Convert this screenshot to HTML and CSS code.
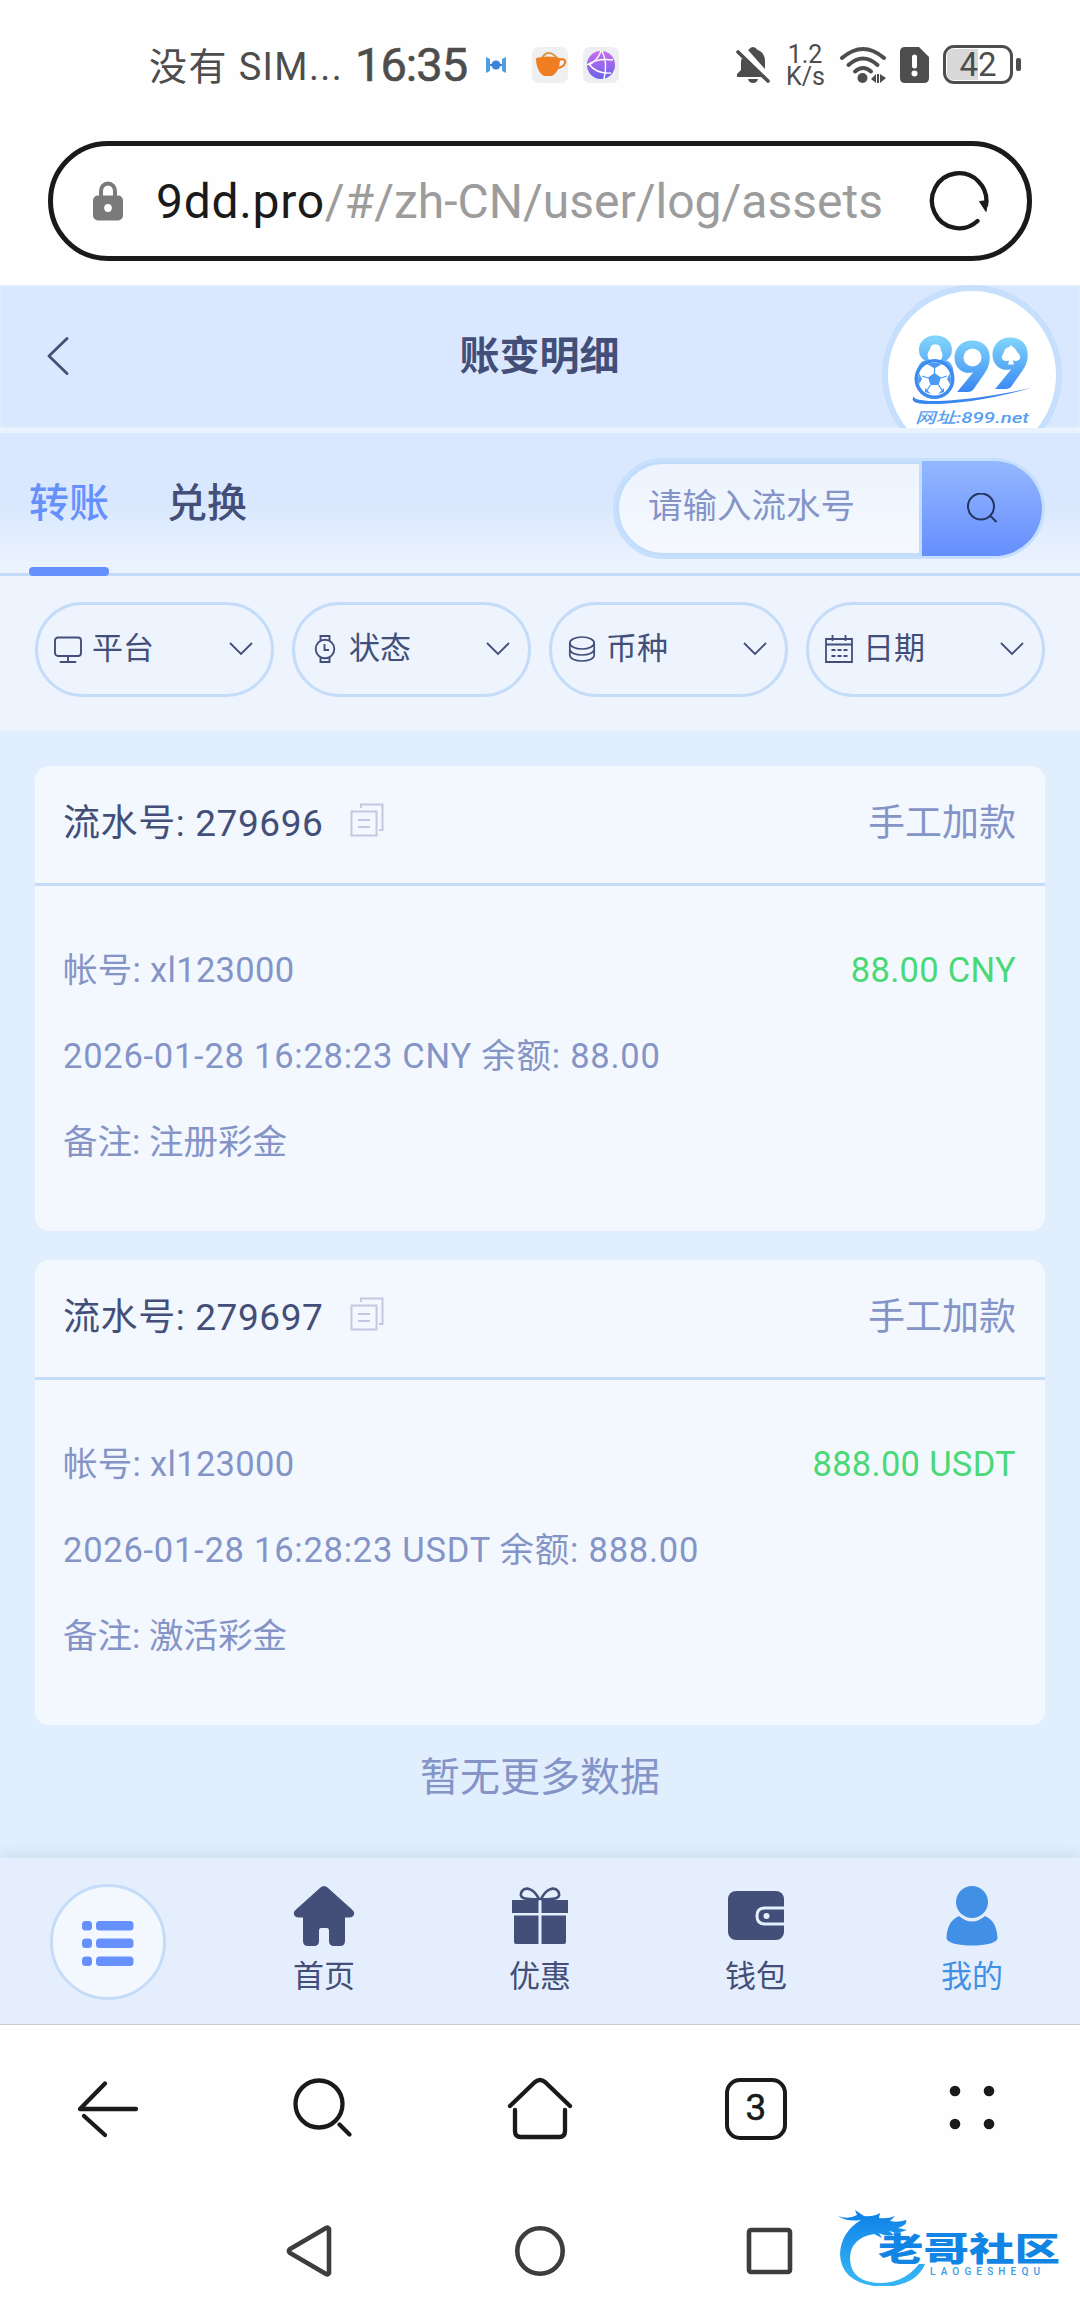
FILE: index.html
```html
<!DOCTYPE html>
<html lang="zh-CN">
<head>
  <meta charset="UTF-8">
  <meta name="viewport" content="width=device-width, initial-scale=1.0">
  <title>账变明细</title>
  <link rel="stylesheet" href="styles.css">
</head>
<body>
  <!-- 状态栏 -->
  <div class="status-bar">
    <span class="carrier">没有 SIM...</span>
    <span class="clock">16:35</span>
    <svg class="st-dock" width="20" height="18" viewBox="0 0 20 18"><path d="M0 1l4 2v12l-4 2zM20 1l-4 2v12l4 2z" fill="#4f9fe0"/><circle cx="10" cy="9" r="4.5" fill="#3b82d8"/><path d="M4 8h12v2H4z" fill="#3b82d8"/></svg>
    <svg class="st-cup" width="36" height="36" viewBox="0 0 36 36">
      <rect width="36" height="36" rx="7" fill="#eff0f1"/>
      <path d="M10 11c2-3 3-5 7-5s5 2 8 5" fill="none" stroke="#d99a4e" stroke-width="2"/>
      <path d="M4 11q12-3 24 0c0 10-3 15-8 18h-8C7 26 4 20 4 11z" fill="#ef7d22"/>
      <path d="M27 13c4-2 7 0 6 3s-5 5-8 5" fill="none" stroke="#ef7d22" stroke-width="2.2"/>
    </svg>
    <svg class="st-globe" width="36" height="36" viewBox="0 0 36 36">
      <defs><linearGradient id="globe" x1="0" y1="0" x2="0" y2="1"><stop offset="0" stop-color="#c86cf0"/><stop offset="1" stop-color="#6a63ea"/></linearGradient></defs>
      <rect width="36" height="36" rx="7" fill="#eceef1"/>
      <circle cx="18" cy="18" r="14" fill="url(#globe)"/>
      <path d="M19 4q6 12 2 28M4 18q10-7 26-5M6 17q7 10 22 9M6 18q9-5 12-14" fill="none" stroke="#fff" stroke-width="1.4"/>
    </svg>
    <svg class="st-bell" width="34" height="38" viewBox="0 0 34 38">
      <path d="M13 3.500q1-2.500 4-2.500t4 2.500q8 3 8 12V23L12 4zM6 12l20 19H1v-3l4-4V15z" fill="#4d4d4d"/>
      <path d="M12 33h10q-1 4-5 4t-5-4z" fill="#4d4d4d"/>
      <path d="M2 6l30 29" stroke="#4d4d4d" stroke-width="3.600" stroke-linecap="round"/>
    </svg>
    <span class="net-speed"><span>1.2</span><span>K/s</span></span>
    <svg class="st-wifi" width="48" height="38" viewBox="0 0 48 38">
      <g fill="none" stroke="#4d4d4d" stroke-width="4" stroke-linecap="round">
        <path d="M3 12Q24-6 45 12"/><path d="M9.500 19Q24 6 38.500 19"/><path d="M16 25.500q8-7 16 0"/>
      </g>
      <circle cx="23.500" cy="32" r="5" fill="#4d4d4d"/>
      <path d="M32 33l5-5v9zM38 28h2v9h-2zM41 28l6 4-6 5z" fill="#4d4d4d"/>
    </svg>
    <svg class="st-sim" width="29" height="36" viewBox="0 0 29 36">
      <path d="M5 0h14l10 10v21q0 5-5 5H5q-5 0-5-5V5q0-5 5-5z" fill="#4d4d4d"/>
      <path d="M14.500 10v9" stroke="#fff" stroke-width="5" stroke-linecap="round"/><circle cx="14.500" cy="26.500" r="3" fill="#fff"/>
    </svg>
    <span class="battery"><span class="battery-level">42</span></span>
    <span class="battery-cap"></span>
  </div>

  <!-- 地址栏 -->
  <div class="address-bar">
    <svg class="lock" width="30" height="40" viewBox="0 0 30 40">
      <path d="M8 17V10a7 7.500 0 0 1 14 0v7" fill="none" stroke="#7a7a7a" stroke-width="4"/>
      <rect y="14.500" width="30" height="25" rx="5" fill="#7a7a7a"/><ellipse cx="15" cy="27" rx="3.800" ry="4" fill="#fff"/>
    </svg>
    <span class="url"><b>9dd.pro</b><i>/#/zh-CN/user/log/assets</i></span>
    <svg class="refresh" width="60" height="60" viewBox="0 0 60 60">
      <path d="M48.500 50A27.200 27.500 0 1 1 57 34" fill="none" stroke="#1a1a1a" stroke-width="4.300" stroke-linecap="round"/>
      <path d="M50.500 30.500l8.500-1-2 11z" fill="#1a1a1a" stroke="#1a1a1a" stroke-linejoin="round"/>
    </svg>
  </div>

  <div class="page">
    <!-- 标题 -->
    <header class="header">
      <svg class="back" width="22" height="40" viewBox="0 0 22 40"><path d="M20 1.500L2 19l18 17.500" fill="none" stroke="#434f78" stroke-width="2.800" stroke-linecap="round" stroke-linejoin="round"/></svg>
      <h1>账变明细</h1>
      <div class="site-logo">
        <svg width="168" height="168" viewBox="0 0 168 168">
          <defs><linearGradient id="logo" gradientUnits="userSpaceOnUse" x1="0" y1="48" x2="0" y2="108"><stop offset="0" stop-color="#7fd3fb"/><stop offset="1" stop-color="#2f7df2"/></linearGradient></defs>
          <g class="logo-num" fill="url(#logo)" stroke="url(#logo)">
            <text x="28" y="95">8</text>
            <text x="65" y="100">9</text>
            <text x="103" y="97">9</text>
          </g>
          <circle cx="47" cy="64" r="7.500" fill="#fff"/>
          <circle cx="84.500" cy="66.500" r="9" fill="#fff"/>
          <circle cx="46.500" cy="88" r="20" fill="#3b8bf3"/><circle cx="46.500" cy="88" r="16.500" fill="#fff"/>
          <path d="M46.500 82l6.500 4.500-2.500 7.500h-8L40 86.500zM39 73l7.500 4.500 7.500-4.500q-7.500-2.500-15 0zM31 82l3 6-3.500 6q-1-6 .5-12zM62 82l-3 6 3.500 6q1-6-.5-12zM37 97l6 6-6-2zM56 97l-6 6 6-2z" fill="#4a9af5"/>
          <path d="M46.500 76v7M53 87l6-2M50.500 94l4 6M42.500 94l-4 6M40 87l-6-2" stroke="#4a9af5" stroke-width="1.300"/>
          <path d="M123 54l8 9c4 6-3 9-6.500 5.500l1.500 5h-6l1.500-5C118 72 111 69 115 63z" fill="#fff"/>
          <path d="M27 104q-8 8 10 9 45 1 106-16-60 13-101 13-20-1-15-6z" fill="#3b86ee"/>
          <text class="logo-url" x="27" y="132" fill="#5aa0f0" textLength="114" lengthAdjust="spacingAndGlyphs">网址:899.net</text>
        </svg>
      </div>
    </header>

    <!-- 标签和搜索 -->
    <div class="tab-bar">
      <nav class="tabs">
        <a class="tab active">转账</a>
        <a class="tab">兑换</a>
      </nav>
      <div class="search">
        <span class="search-input">请输入流水号</span>
        <button class="search-btn">
          <svg width="32" height="32" viewBox="0 0 32 32"><g fill="none" stroke="#26355f" stroke-width="2"><circle cx="15" cy="13.500" r="13"/><path d="M24 22.500l6.500 6.500"/></g></svg>
        </button>
      </div>
    </div>

    <!-- 筛选 -->
    <div class="filters">
      <div class="filter">
        <svg class="f-icon" viewBox="0 0 28 28"><g fill="none" stroke="#434f78" stroke-width="1.900" stroke-linecap="round"><rect x="1" y="2.500" width="26" height="18.500" rx="3"/><path d="M14 21v5.500M6.500 27h15"/></g></svg>
        <span>平台</span>
        <svg class="arrow" viewBox="0 0 24 14"><path d="M1 1l11 11L23 1"/></svg>
      </div>
      <div class="filter">
        <svg class="f-icon" viewBox="0 0 28 28"><g fill="none" stroke="#434f78" stroke-width="1.900"><circle cx="14" cy="14" r="9.300"/><path d="M9.500 6V1h9v5M9.500 22v5h9v-5M13.500 9v6h4.500"/></g></svg>
        <span>状态</span>
        <svg class="arrow" viewBox="0 0 24 14"><path d="M1 1l11 11L23 1"/></svg>
      </div>
      <div class="filter">
        <svg class="f-icon" viewBox="0 0 28 28"><g fill="none" stroke="#434f78" stroke-width="1.700"><ellipse cx="14" cy="8" rx="12.200" ry="6"/><path d="M1.800 8v12c0 8 24.400 8 24.400 0V8M1.800 14c0 8 24.400 8 24.400 0"/></g></svg>
        <span>币种</span>
        <svg class="arrow" viewBox="0 0 24 14"><path d="M1 1l11 11L23 1"/></svg>
      </div>
      <div class="filter">
        <svg class="f-icon" viewBox="0 0 28 28"><g fill="none" stroke="#434f78" stroke-width="1.800"><path d="M1 4h26v23H1zM1 9.500h26M7.500 0v6M20.500 0v6"/><path d="M6.500 15h16M6.500 21h16" stroke-dasharray="4 2"/></g></svg>
        <span>日期</span>
        <svg class="arrow" viewBox="0 0 24 14"><path d="M1 1l11 11L23 1"/></svg>
      </div>
    </div>

    <!-- 记录列表 -->
    <main class="list">
      <section class="card">
        <div class="card-head">
          <span class="serial">流水号: 279696</span>
          <svg class="copy" width="34" height="34" viewBox="0 0 34 34"><g fill="none" stroke="#c3c8e2" stroke-width="2"><path d="M1.500 8.500h25v24h-25zM11 5V1.500h21.500V27H29M8 17h12M8 24h12"/></g></svg>
          <span class="type">手工加款</span>
        </div>
        <div class="card-body">
          <div class="row"><span class="account">帐号: xl123000</span><span class="amount">88.00 CNY</span></div>
          <div class="row"><span class="detail">2026-01-28 16:28:23 CNY 余额: 88.00</span></div>
          <div class="row"><span>备注: 注册彩金</span></div>
        </div>
      </section>
      <section class="card">
        <div class="card-head">
          <span class="serial">流水号: 279697</span>
          <svg class="copy" width="34" height="34" viewBox="0 0 34 34"><g fill="none" stroke="#c3c8e2" stroke-width="2"><path d="M1.500 8.500h25v24h-25zM11 5V1.500h21.500V27H29M8 17h12M8 24h12"/></g></svg>
          <span class="type">手工加款</span>
        </div>
        <div class="card-body">
          <div class="row"><span class="account">帐号: xl123000</span><span class="amount">888.00 USDT</span></div>
          <div class="row"><span class="detail">2026-01-28 16:28:23 USDT 余额: 888.00</span></div>
          <div class="row"><span>备注: 激活彩金</span></div>
        </div>
      </section>
      <p class="no-more">暂无更多数据</p>
    </main>

    <!-- 底部导航 -->
    <nav class="tabbar">
      <a class="menu-item">
        <span class="menu-btn">
          <svg width="52" height="46" viewBox="0 0 52 46" fill="#6691fd"><rect width="10" height="9.500" rx="3.500"/><rect x="14" width="37.500" height="9.500" rx="3.500"/><rect y="17.500" width="10" height="9.500" rx="3.500"/><rect x="14" y="17.500" width="37.500" height="9.500" rx="3.500"/><rect y="35.500" width="10" height="9.500" rx="3.500"/><rect x="14" y="35.500" width="37.500" height="9.500" rx="3.500"/></svg>
        </span>
      </a>
      <a class="nav-item">
        <svg width="62" height="62" viewBox="0 0 62 62"><path d="M27.500 2.500q3.500-3 7 0L59 24.500q3.500 3 1.500 6-1 2-4 2H52V56q0 5-5 5H41q-5 0-5-5V46q0-3-2-3h-6q-2 0-2 3V56q0 5-5 5H15q-5 0-5-5V32.500H5.500q-3 0-4-2-2-3 1.500-6z" fill="#434f78"/></svg>
        <span>首页</span>
      </a>
      <a class="nav-item">
        <svg width="62" height="62" viewBox="0 0 62 62"><path d="M3 15h26.500v13H3zM32.500 15H59v13H32.500zM5 30.500h24.500V59H7q-2 0-2-2zM32.500 30.500H57V57q0 2-2 2H32.500z" fill="#434f78"/><path d="M30 14C25 4 17 1 13 6c-4 7 2 9 17 8zM32 14C37 4 45 1 49 6c4 7-2 9-17 8z" fill="none" stroke="#434f78" stroke-width="2.600"/></svg>
        <span>优惠</span>
      </a>
      <a class="nav-item">
        <svg width="62" height="62" viewBox="0 0 62 62"><rect x="3" y="6" width="56" height="49" rx="8" fill="#434f78"/><path d="M60 23H40q-8 0-8 8t8 8h20" fill="none" stroke="#e4eefd" stroke-width="3"/><circle cx="41.500" cy="31" r="3" fill="#e4eefd"/></svg>
        <span>钱包</span>
      </a>
      <a class="nav-item current">
        <svg width="62" height="62" viewBox="0 0 62 62" fill="#4190e6"><ellipse cx="31" cy="17" rx="16" ry="16"/><path d="M18 31q13 11 26 0c9 4 12 12 12.500 22 0 10-51 10-51 0C6 43 9 35 18 31z"/></svg>
        <span>我的</span>
      </a>
    </nav>
  </div>

  <!-- 浏览器工具栏 -->
  <div class="browser-bar">
    <svg viewBox="0 0 66 66"><path d="M61 33H5L30 7.500M9 40l21 19" class="line"/></svg>
    <svg viewBox="0 0 66 66"><circle cx="28" cy="28" r="23.500" class="line"/><path d="M48.500 48.500l10 10" class="line"/></svg>
    <svg viewBox="0 0 66 66"><path d="M3 30L28 6q5-4 10 0l25 24M8 34v21q0 6 6 6h38q6 0 6-6V34" class="line"/></svg>
    <span class="tab-count">3</span>
    <svg viewBox="0 0 66 66" fill="#1a1a1a"><circle cx="16" cy="15" r="5.300"/><circle cx="50" cy="15" r="5.300"/><circle cx="16" cy="48" r="5.300"/><circle cx="50" cy="48" r="5.300"/></svg>
  </div>

  <!-- 系统导航键 -->
  <div class="system-bar">
    <svg width="50" height="56" viewBox="0 0 50 56"><path d="M44 6v44q-1 2-3 1L5 30q-2-2 0-4L41 5q2-1 3 1z"/></svg>
    <svg width="56" height="56" viewBox="0 0 56 56"><circle cx="28" cy="28" r="22.700"/></svg>
    <svg width="50" height="56" viewBox="0 0 50 56"><rect x="4" y="7" width="41" height="42" rx="2"/></svg>
    <svg class="watermark" width="230" height="84" viewBox="0 0 230 84">
      <defs><linearGradient id="wm" gradientUnits="userSpaceOnUse" x1="0" y1="8" x2="0" y2="76"><stop offset="0" stop-color="#0c7fe8"/><stop offset="1" stop-color="#35b4f4"/></linearGradient></defs>
      <path d="M2 14q10 4 19-1l-2-5 9 6q9 1 16-3l-1 5q9 1 16-2l-5 5q8 2 16-1 2 5-8 8l9 2q-9 4-18 1l5 4q-8 2-15-2l3 5-8-4q-24 4-24 25 1 24 32 24 23-1 37-19l6 0q-9 22-43 23Q5 82 4 52q1-22 21-34-14 2-23-4z" fill="url(#wm)"/>
      <text class="wm-name" transform="translate(42 59) scale(1 .74)" textLength="182" lengthAdjust="spacingAndGlyphs">老哥社区</text>
      <text class="wm-sub" x="94" y="73" textLength="110" lengthAdjust="spacing">LAOGESHEQU</text>
    </svg>
  </div>
</body>
</html>
```
FILE: styles.css
```css
* {
  box-sizing: border-box;
}

/* 全局 */
body {
  width: 1080px;
  height: 2310px;
  margin: 0;
  overflow: hidden;
  background-color: #fefefe;
  color: #434f78;
  font-family: Roboto, "Noto Sans CJK SC", sans-serif;
}

svg {
  display: block;
  flex: none;
}

/* 状态栏 */
.status-bar {
  display: flex;
  align-items: center;
  height: 141px;
  padding: 0 59px 12px 149px;
  color: #4d4d4d;
}

.carrier {
  width: 206px;
  margin-top: -3px;
  font-size: 38px;
  letter-spacing: 1.4px;
  white-space: nowrap;
}

.clock {
  width: 131px;
  font-size: 47px;
  font-weight: 400;
  letter-spacing: -1px;
  line-height: 50px;
  -webkit-text-stroke: 0.6px #4d4d4d;
}

.st-cup {
  margin-left: 26px;
}

.st-globe {
  margin-left: 15px;
}

.st-bell {
  margin-left: auto;
}

.net-speed {
  display: flex;
  flex-direction: column;
  width: 38px;
  margin: 2px 0 0 16px;
  font-size: 25px;
  line-height: 22px;
  text-align: center;
}

.st-wifi {
  margin-left: 15px;
}

.st-sim {
  margin-left: 13px;
}

.battery {
  width: 70px;
  height: 39px;
  margin-left: 14px;
  padding: 1px;
  border: 3px solid #4d4d4d;
  border-radius: 11px;
}

.battery-level {
  display: block;
  height: 31px;
  border-radius: 6px;
  background: linear-gradient(90deg, #d8d8d8 50%, transparent 50%);
  font-size: 33px;
  line-height: 32px;
  text-align: center;
}

.battery-cap {
  width: 5px;
  height: 13px;
  margin-left: 3px;
  border-radius: 2px;
  background-color: #4d4d4d;
}

/* 地址栏 */
.address-bar {
  display: flex;
  align-items: center;
  height: 120px;
  margin: 0 48px;
  padding: 0 38px 0 40px;
  border: 5px solid #1a1a1a;
  border-radius: 60px;
}

.url {
  flex: 1;
  margin-left: 33px;
  font-size: 48px;
  white-space: nowrap;
}

.url b {
  color: #1a1a1a;
  font-weight: 400;
  letter-spacing: 0.7px;
}

.url i {
  color: #9c9c9c;
  font-style: normal;
}

/* 网页内容 */
.page {
  height: 1740px;
  margin-top: 24px;
  border-bottom: 1px solid #c5cbd3;
  background-color: #e0eefe;
}

.header {
  position: relative;
  display: flex;
  align-items: center;
  height: 143px;
  padding-left: 47px;
  overflow: hidden;
  background-color: #d9e8fe;
  box-shadow: inset 0 0 3px #f0f6fe;
}

.header h1 {
  flex: 1;
  margin: 1px 70px 0 0;
  font-size: 40px;
  line-height: 58px;
  text-align: center;
}

.site-logo {
  position: absolute;
  top: 0;
  right: 18px;
  width: 180px;
  height: 180px;
  border: 6px solid #c5dffd;
  border-radius: 50%;
  background-color: #fff;
}

.logo-num {
  font-family: Lato, sans-serif;
  font-size: 67px;
  font-weight: 900;
  stroke-width: 2px;
}

.logo-url {
  font-size: 15px;
  font-style: italic;
  font-weight: 500;
}

/* 标签 */
.tab-bar {
  display: flex;
  justify-content: space-between;
  height: 148px;
  padding: 0 35px 0 29px;
  border-top: 5px solid #eaf2fe;
  border-bottom: 3px solid #c5dcf9;
  background: linear-gradient(#d9e8fe 50%, #edf4fe);
}

.tabs {
  display: flex;
  gap: 58px;
}

.tab {
  position: relative;
  font-size: 40px;
  font-weight: 500;
  line-height: 141px;
}

.tab.active {
  color: #6691fd;
}

.tab.active::after {
  content: "";
  position: absolute;
  right: 0;
  bottom: -3px;
  left: 0;
  height: 9px;
  border-radius: 4px;
  background-color: #6691fd;
}

.search {
  display: flex;
  width: 432px;
  height: 101px;
  margin-top: 25px;
  border: 3px solid #c5dffd;
  border-radius: 51px;
}

.search-input {
  flex: 1;
  padding-left: 29px;
  border: 3px solid #c2dcfb;
  border-radius: 48px 0 0 48px;
  background: linear-gradient(#edf4fe, #f5f9fe);
  color: #8594c6;
  font-size: 34.5px;
  line-height: 85px;
}

.search-btn {
  display: flex;
  align-items: center;
  justify-content: center;
  width: 120px;
  padding: 0;
  border: 0;
  border-radius: 0 48px 48px 0;
  background: linear-gradient(#94b8fe, #658efe);
}

/* 筛选 */
.filters {
  display: grid;
  grid-template-columns: repeat(4, 1fr);
  gap: 18px;
  height: 155px;
  padding: 26px 35px 34px;
  background-color: #edf4fe;
}

.filter {
  display: flex;
  align-items: center;
  height: 95px;
  padding: 0 18px 2px 16px;
  border: 3px solid #c5dcf9;
  border-radius: 48px;
  font-size: 31px;
  line-height: 46px;
}

.f-icon {
  width: 28px;
  height: 28px;
  margin-right: 10px;
}

.arrow {
  width: 24px;
  height: 14px;
  margin-left: auto;
  fill: none;
  stroke: #434f78;
  stroke-width: 1.8;
}

/* 记录卡片 */
.list {
  height: 1127px;
  padding: 35px 35px 0;
}

.card {
  height: 465px;
  margin-bottom: 29px;
  border-radius: 14px;
  background-color: #f3f8fe;
}

.card-head {
  display: flex;
  align-items: center;
  height: 120px;
  padding: 0 29px 9px 28px;
  border-bottom: 3px solid #c5dcf9;
  font-size: 37px;
}

.serial {
  width: 260px;
  letter-spacing: 0.6px;
  white-space: nowrap;
}

.copy {
  margin-left: 27px;
}

.type {
  margin-left: auto;
  color: #8594c6;
}

.card-body {
  padding: 41px 29px 0 28px;
  color: #8594c6;
  font-size: 34.5px;
}

.row {
  display: flex;
  justify-content: space-between;
  height: 86px;
  line-height: 87px;
  white-space: nowrap;
}

.account {
  letter-spacing: 0.3px;
}

/* 日期和余额一行字距稍宽 */
.detail {
  letter-spacing: 0.75px;
}

.amount {
  color: #4bd877;
  letter-spacing: 0.3px;
}

.no-more {
  margin: 0;
  color: #8594c6;
  font-size: 40px;
  line-height: 47px;
  text-align: center;
}

/* 底部导航 */
.tabbar {
  position: relative;
  display: grid;
  grid-template-columns: repeat(5, 1fr);
  height: 166px;
  background-color: #e4eefd;
  box-shadow: 0 -2px 14px rgba(90, 120, 150, 0.16);
  clip-path: inset(-20px 0 0 0);
}

.menu-item {
  display: flex;
  justify-content: center;
  padding-top: 26px;
}

.menu-btn {
  display: flex;
  align-items: center;
  justify-content: center;
  width: 116px;
  height: 116px;
  padding-top: 3px;
  border: 3px solid #c5dcf9;
  border-radius: 50%;
  background-color: #f3f8fe;
}

.nav-item {
  display: flex;
  flex-direction: column;
  align-items: center;
  padding-top: 27px;
  font-size: 31px;
  line-height: 46px;
}

.nav-item span {
  margin-top: 7px;
}

.nav-item.current {
  color: #4190e6;
}

/* 浏览器工具栏 */
.browser-bar {
  display: grid;
  grid-template-columns: repeat(5, 1fr);
  align-items: center;
  justify-items: center;
  height: 168px;
}

.browser-bar svg {
  width: 66px;
  height: 66px;
}

.line {
  fill: none;
  stroke: #1a1a1a;
  stroke-width: 4.3;
  stroke-linecap: round;
  stroke-linejoin: round;
}

.tab-count {
  width: 62px;
  height: 62px;
  border: 4.5px solid #1a1a1a;
  border-radius: 15px;
  color: #1a1a1a;
  font-size: 37px;
  line-height: 51px;
  text-align: center;
  -webkit-text-stroke: 0.5px #1a1a1a;
}

/* 系统导航键 */
.system-bar {
  position: relative;
  display: flex;
  align-items: center;
  justify-content: space-between;
  height: 116px;
  padding: 0 285px 0 285px;
}

.system-bar > svg:not(.watermark) {
  fill: none;
  stroke: #3d3d3d;
  stroke-width: 4.6;
}

.watermark {
  position: absolute;
  top: 9px;
  right: 14px;
}

.wm-name {
  fill: #1184e4;
  font-size: 44px;
  font-weight: 900;
}

.wm-sub {
  fill: #3d9be6;
  font-size: 10px;
  font-weight: 500;
}
```
